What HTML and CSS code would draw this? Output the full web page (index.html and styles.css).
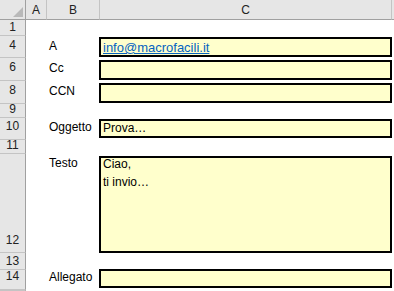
FILE: index.html
```html
<!DOCTYPE html>
<html lang="it">
<head>
<meta charset="utf-8">
<title>Email</title>
<link rel="stylesheet" href="styles.css">
</head>
<body>
<div class="sheet">
  <div class="row head">
    <div class="corner"><span class="tri"></span></div>
    <div class="colhead">A</div>
    <div class="colhead">B</div>
    <div class="colhead">C</div>
    <div class="colhead last"></div>
  </div>
  <div class="row r1"><div class="rowhead">1</div></div>
  <div class="row r4">
    <div class="rowhead">4</div>
    <div class="label">A</div>
    <div class="box"><a class="link" href="#">info@macrofacili.it</a></div>
  </div>
  <div class="row r6">
    <div class="rowhead">6</div>
    <div class="label">Cc</div>
    <div class="box"></div>
  </div>
  <div class="row r8">
    <div class="rowhead">8</div>
    <div class="label">CCN</div>
    <div class="box"></div>
  </div>
  <div class="row r9"><div class="rowhead">9</div></div>
  <div class="row r10">
    <div class="rowhead">10</div>
    <div class="label">Oggetto</div>
    <div class="box">Prova…</div>
  </div>
  <div class="row r11"><div class="rowhead">11</div></div>
  <div class="row r12">
    <div class="rowhead">12</div>
    <div class="label top">Testo</div>
    <div class="box multi"><div class="body-text">Ciao,<br>ti invio…</div></div>
  </div>
  <div class="row r13"><div class="rowhead">13</div></div>
  <div class="row r14">
    <div class="rowhead">14</div>
    <div class="label">Allegato</div>
    <div class="box"></div>
  </div>
  <div class="row r15"><div class="rowhead"></div></div>
</div>
</body>
</html>
```
FILE: styles.css
```css
html, body {
  margin: 0;
  padding: 0;
  background: #ffffff;
}
body {
  width: 394px;
  height: 291px;
  overflow: hidden;
  font-family: "Liberation Sans", Arial, sans-serif;
  font-size: 12px;
  line-height: 15px;
  color: #000;
}
.sheet {
  display: grid;
  grid-template-columns: 26px 21px 53px 292px 1fr;
  grid-template-rows: 20px 16px 22px 23px 23px 14px 22px 14px 99px 17px 20px 1fr;
  height: 291px;
}
.row {
  display: contents;
  --pb: 4px;
  --mt: 2px;
  --bh: 20px;
}
.corner {
  grid-column: 1;
  background: #e6e6e6;
  border-right: 1px solid #a0a0a0;
  border-bottom: 1px solid #a0a0a0;
  display: flex;
  align-items: flex-end;
  justify-content: flex-end;
  padding: 0 2px 2px 0;
}
.tri {
  width: 0;
  height: 0;
  border-left: 10px solid transparent;
  border-bottom: 10px solid #b9b9b9;
}
.colhead {
  background: #e6e6e6;
  border-right: 1px solid #c4c4c4;
  border-bottom: 1px solid #a0a0a0;
  display: flex;
  align-items: flex-end;
  justify-content: center;
  padding-bottom: 1px;
  color: #222;
}
.colhead.last {
  border-right: 0;
}
.rowhead {
  grid-column: 1;
  background: #e6e6e6;
  border-right: 1px solid #a0a0a0;
  border-bottom: 1px solid #c4c4c4;
  display: flex;
  align-items: flex-end;
  justify-content: center;
  padding-bottom: var(--pb);
  color: #222;
}
.label {
  grid-column: 3;
  align-self: end;
  padding-left: 2px;
  padding-bottom: var(--pb);
}
.label.top {
  align-self: start;
  margin-top: 2px;
}
.box {
  grid-column: 4;
  align-self: start;
  margin-left: -1px;
  margin-top: var(--mt);
  height: var(--bh);
  box-sizing: border-box;
  border: 2px solid #000;
  background: #ffffcc;
  padding-left: 2px;
  display: flex;
  align-items: flex-end;
}
.box.multi {
  align-items: flex-start;
}
.body-text {
  line-height: 18px;
  margin-top: -3px;
}
.link {
  color: #0563c1;
  text-decoration: underline;
  font-size: 13px;
}
.r1 { --pb: 0px; }
.r4 { --pb: 4px; --mt: 1px; --bh: 20px; }
.r6 { --pb: 5px; --mt: 2px; --bh: 20px; }
.r8 { --pb: 5px; --mt: 2px; --bh: 20px; }
.r9 { --pb: 0px; }
.r10 { --pb: 5px; --mt: 1px; --bh: 19px; }
.r11 { --pb: 0px; }
.r12 { --pb: 4px; --mt: 2px; --bh: 97px; }
.r13 { --pb: 0px; }
.r14 { --pb: 5px; --mt: -1px; --bh: 19px; }
.r15 { --pb: 0px; }
```
